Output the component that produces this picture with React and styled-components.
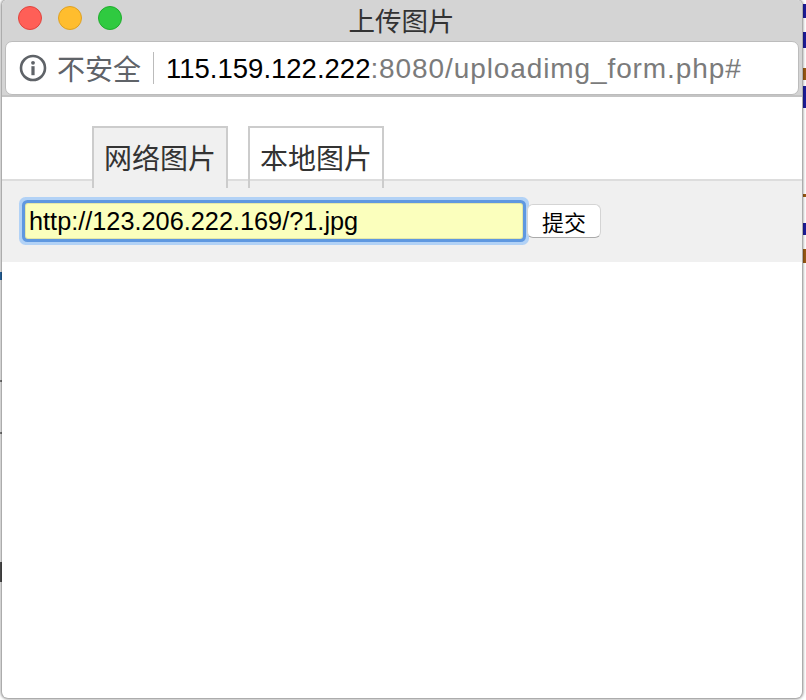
import React from 'react'
import styled, { createGlobalStyle } from 'styled-components'

const GlobalStyle = createGlobalStyle`
  html, body {
    margin: 0;
    padding: 0;
    background: #fff;
    overflow: hidden;
  }
  body {
    font-family: "Liberation Sans", "Noto Sans CJK SC", sans-serif;
  }
`

const CJK = `"Noto Sans CJK SC", "Liberation Sans", sans-serif`

const Page = styled.div`
  width: 806px;
  height: 700px;
  display: flex;
  align-items: flex-start;
  background: #fff;
  overflow: hidden;
`

const Edge = styled.div`
  flex: none;
  width: ${p => p.$width}px;
  height: 700px;
  display: flex;
  flex-direction: column;
  align-items: ${p => p.$align};
`

const Mark = styled.div`
  flex: none;
  width: ${p => p.$width || 3}px;
  height: ${p => p.$height}px;
  margin-top: ${p => p.$gap}px;
  background: ${p => p.$color};
`

const Window = styled.div`
  flex: none;
  width: 800px;
  height: 698px;
  display: flex;
  flex-direction: column;
  background: #fff;
  border-radius: 5px 5px 6px 6px;
  box-shadow: 0 0 3px 1px rgba(0, 0, 0, 0.5);
  overflow: hidden;
  position: relative;
`

const TitleBar = styled.div`
  height: 41px;
  flex: none;
  box-sizing: border-box;
  padding: 5px 1px 0 0;
  background: #d4d4d4;
  position: relative;
`

const Lights = styled.div`
  display: flex;
  gap: 16px;
  padding-left: 16px;
  position: absolute;
  top: 6px;
  left: 0;
`

const Light = styled.span`
  width: 22px;
  height: 22px;
  border-radius: 50%;
  border: 1px solid ${p => p.$border};
  background: ${p => p.$color};
`

const Title = styled.div`
  text-align: center;
  font-family: ${CJK};
  font-size: 26.5px;
  line-height: 30px;
  color: #333;
`

const Toolbar = styled.div`
  flex: none;
  height: 56px;
  padding: 0 3px;
  box-sizing: border-box;
  background: #d4d4d4;
  border-bottom: 2px solid #c4c4c4;
`

const AddressBar = styled.div`
  height: 54px;
  box-sizing: border-box;
  display: flex;
  align-items: center;
  background: #fff;
  border: 1px solid #bcbcbc;
  border-radius: 7px;
  padding-left: 13px;
`

const InfoIcon = styled.svg`
  width: 28px;
  height: 28px;
  flex: none;
`

const Secure = styled.span`
  font-family: ${CJK};
  font-size: 28px;
  line-height: 40px;
  color: #5f6368;
  margin-left: 10px;
`

const Divider = styled.span`
  width: 1px;
  height: 32px;
  background: #bbb;
  margin: 0 12px;
`

const Url = styled.span`
  font-size: 27.5px;
  line-height: 40px;
  color: #000;
  white-space: nowrap;
  padding-top: 2px;
`

const UrlRest = styled.span`
  font-size: 28px;
  letter-spacing: 0.9px;
  color: #7b7b7b;
`

const Tabs = styled.div`
  display: flex;
  gap: 20px;
  padding: 29px 0 0 90px;
  margin-bottom: -9px;
  position: relative;
  z-index: 1;
`

const Tab = styled.div`
  width: 136px;
  height: 62px;
  box-sizing: border-box;
  border: 2px solid #ccc;
  border-bottom: none;
  background: ${p => (p.$active ? '#f0f0f0' : 'transparent')};
  font-family: ${CJK};
  font-size: 28px;
  line-height: 58px;
  text-align: center;
  color: #333;
`

const Panel = styled.div`
  height: 83px;
  box-sizing: border-box;
  background: #f0f0f0;
  border-top: 2px solid #ddd;
  display: flex;
  align-items: flex-start;
  padding: 23px 0 0 24px;
`

const UrlInput = styled.input`
  width: 496px;
  height: 34px;
  box-sizing: border-box;
  border: none;
  outline: none;
  padding: 1px 0 0 3px;
  background: #fbffbd;
  box-shadow: 0 0 0 1px #e4e8a8, 0 0 0 4px #5f98e0, 0 0 0 7px #b2d2f6;
  border-radius: 2px;
  font-family: "Liberation Sans", sans-serif;
  font-size: 25.3px;
  color: #000;
`

const Submit = styled.button`
  width: 74px;
  height: 34px;
  margin-left: 5px;
  box-sizing: border-box;
  background: #fff;
  border: 1px solid #d4d4d4;
  border-bottom-color: #aaa;
  border-radius: 6px;
  padding: 0;
  font-family: ${CJK};
  font-size: 22px;
  line-height: 30px;
  color: #000;
  position: relative;
`

export default function App() {
  return (
    <Page>
      <GlobalStyle />
      <Edge $width={2} $align="flex-start">
        <Mark $gap={272} $height={8} $width={2} $color="#2a6fb0" />
        <Mark $gap={100} $height={2} $width={2} $color="#888" />
        <Mark $gap={50} $height={2} $width={2} $color="#888" />
        <Mark $gap={128} $height={20} $width={2} $color="#555" />
      </Edge>
      <Window>
        <TitleBar>
          <Lights>
            <Light $color="#ff5f57" $border="#e0443e" />
            <Light $color="#ffbd2e" $border="#dea123" />
            <Light $color="#2fca40" $border="#1fad2d" />
          </Lights>
          <Title>上传图片</Title>
        </TitleBar>
        <Toolbar>
          <AddressBar>
            <InfoIcon viewBox="0 0 28 28" fill="none">
              <circle cx="14" cy="14" r="12" stroke="#5f6368" strokeWidth="2.6" />
              <circle cx="14" cy="8.8" r="1.9" fill="#5f6368" />
              <rect x="12.4" y="12.2" width="3.2" height="9" fill="#5f6368" />
            </InfoIcon>
            <Secure>不安全</Secure>
            <Divider />
            <Url>
              115.159.122.222
              <UrlRest>:8080/uploadimg_form.php#</UrlRest>
            </Url>
          </AddressBar>
        </Toolbar>
        <Tabs>
          <Tab $active>网络图片</Tab>
          <Tab>本地图片</Tab>
        </Tabs>
        <Panel>
          <UrlInput readOnly value="http://123.206.222.169/?1.jpg" />
          <Submit>提交</Submit>
        </Panel>
      </Window>
      <Edge $width={4} $align="flex-end">
        <Mark $gap={4} $height={14} $color="#1c1c9c" />
        <Mark $gap={14} $height={16} $color="#1c1c9c" />
        <Mark $gap={20} $height={12} $color="#9a5a14" />
        <Mark $gap={6} $height={22} $color="#1c1c9c" />
        <Mark $gap={86} $height={3} $color="#9a5a14" />
        <Mark $gap={26} $height={12} $color="#1c1c9c" />
        <Mark $gap={14} $height={14} $color="#9a5a14" />
      </Edge>
    </Page>
  )
}
